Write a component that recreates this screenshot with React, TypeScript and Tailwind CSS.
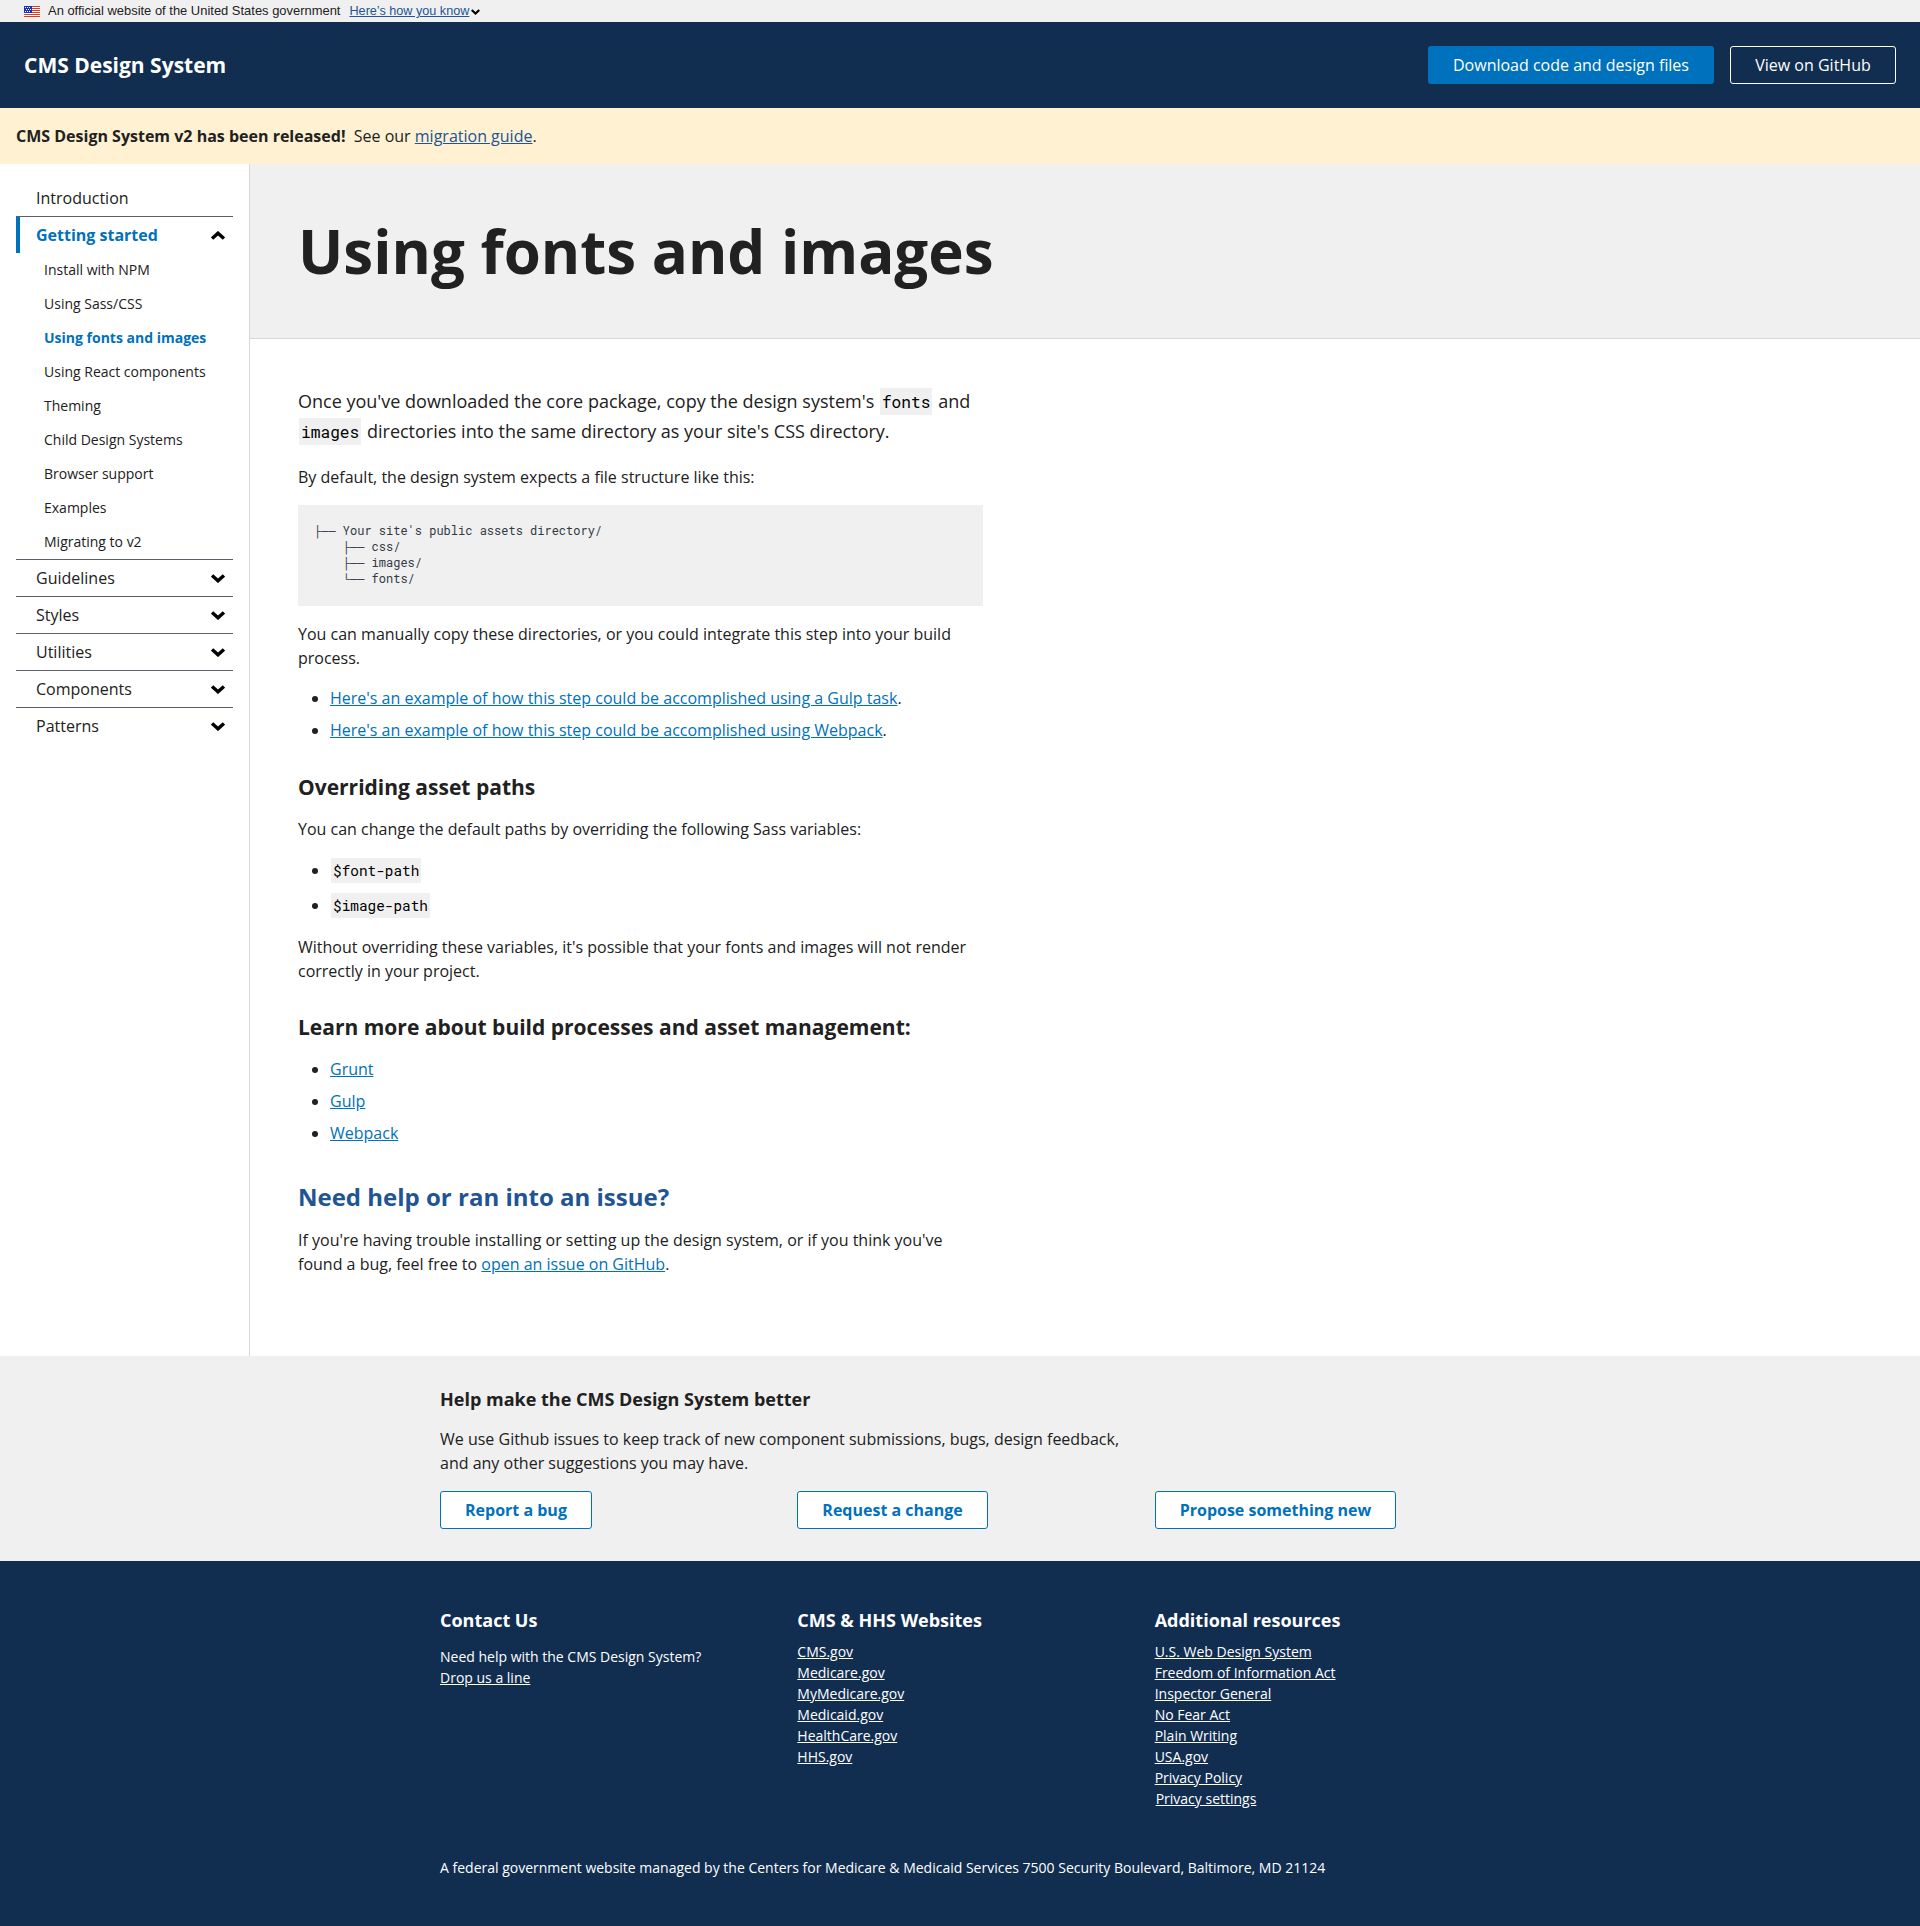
import React from 'react';

const sections = ['Guidelines', 'Styles', 'Utilities', 'Components', 'Patterns'];
const subItems = [
  'Install with NPM',
  'Using Sass/CSS',
  'Using fonts and images',
  'Using React components',
  'Theming',
  'Child Design Systems',
  'Browser support',
  'Examples',
  'Migrating to v2',
];
const websites = ['CMS.gov', 'Medicare.gov', 'MyMedicare.gov', 'Medicaid.gov', 'HealthCare.gov', 'HHS.gov'];
const resources = [
  'U.S. Web Design System',
  'Freedom of Information Act',
  'Inspector General',
  'No Fear Act',
  'Plain Writing',
  'USA.gov',
  'Privacy Policy',
];

function Chevron({ up = false, className = '' }: { up?: boolean; className?: string }) {
  return (
    <svg viewBox="0 0 14 9" className={className} fill="none" stroke="#000" strokeWidth="3.4">
      {up ? <path d="M1.1 7.6 7 2.2l5.9 5.4" /> : <path d="M1.1 1.4 7 6.8l5.9-5.4" />}
    </svg>
  );
}

function Flag() {
  return (
    <svg viewBox="0 0 16 11" className="mt-px h-[11px] w-4" shapeRendering="crispEdges">
      <rect width="16" height="11" fill="#fff" />
      {[0, 2, 4, 6, 8, 10].map((y) => (
        <rect key={y} y={y} width="16" height="1" fill="#db3e1f" />
      ))}
      <rect width="8" height="7" fill="#1e33b1" />
      {[1, 3, 5].map((y) =>
        [1, 3, 5].map((x) => <rect key={`${x}-${y}`} x={y === 3 ? x + 1 : x} y={y} width="1" height="1" fill="#fff" />),
      )}
    </svg>
  );
}

function Link({ children }: { children: React.ReactNode }) {
  return <a className="text-[#0071bc] underline">{children}</a>;
}

function Code({ children }: { children: React.ReactNode }) {
  return (
    <code className="mx-px bg-[#f0f0f0] px-[2px] py-[3px] font-['Roboto_Mono','Liberation_Mono',monospace] text-[0.9em] leading-none text-black">
      {children}
    </code>
  );
}

export default function App() {
  return (
    <div className="flex h-[1926px] flex-col bg-white font-['Open_Sans',sans-serif] text-base text-[#212121]">
      <div className="flex h-[22px] items-center bg-[#f0f0f0] pl-6 font-['Liberation_Sans',sans-serif] text-[12.95px] leading-[18px]">
        <Flag />
        <span className="ml-2">An official website of the United States government</span>
        <a className="ml-[9px] text-[12.65px] text-[#205493] underline">Here’s how you know</a>
        <Chevron className="ml-[2px] mt-px h-[6px] w-[9px]" />
      </div>

      <header className="flex h-[86px] items-center bg-[#112e51] px-6 text-white">
        <span className="text-[21px] font-bold leading-[27px]">CMS Design System</span>
        <div className="ml-auto flex gap-4">
          <button className="h-[38px] w-[286px] rounded-[3px] bg-[#0071bc]">Download code and design files</button>
          <button className="h-[38px] w-[166px] rounded-[3px] border border-white">View on GitHub</button>
        </div>
      </header>

      <div className="flex h-14 items-center bg-[#fff1d2] px-4">
        <p>
          <b>CMS Design System v2 has been released!</b>&nbsp; See our <a className="text-[#205493] underline">migration guide</a>.
        </p>
      </div>

      <div className="flex h-[1192px]">
        <nav className="w-[250px] border-r border-[#d6d7d9] pl-4 pr-4 pt-4">
          <div className="flex h-[37px] items-center border-b border-[#5b616b] pl-5">Introduction</div>
          <div className="flex h-9 items-center border-l-4 border-[#0071bc] pl-4 pr-2 font-bold text-[#0071bc]">
            Getting started
            <Chevron up className="ml-auto h-[9px] w-[14px]" />
          </div>
          <ul className="border-b border-[#5b616b] text-sm leading-[21px]">
            {subItems.map((item) => (
              <li
                key={item}
                className={
                  item === 'Using fonts and images'
                    ? 'flex h-[34px] items-center pb-0.5 pl-7 font-bold text-[#0071bc]'
                    : 'flex h-[34px] items-center pb-0.5 pl-7'
                }
              >
                {item}
              </li>
            ))}
          </ul>
          {sections.map((s) => (
            <div key={s} className="flex h-[37px] items-center border-b border-[#5b616b] pl-5 pr-2 last:h-9 last:border-b-0">
              {s}
              <Chevron className="ml-auto h-[9px] w-[14px]" />
            </div>
          ))}
        </nav>

        <main className="flex-1">
          <div className="flex h-[175px] items-center border-b border-[#d6d7d9] bg-[#f0f0f0] pl-12">
            <h1 className="text-[60px] font-bold leading-[78px]">Using fonts and images</h1>
          </div>
          <div className="w-[733px] pl-12 pt-[47px]">
            <p className="h-[60px] text-[18px] leading-[30px]">
              Once you've downloaded the core package, copy the design system's{' '}
              <Code>fonts</Code> and{' '}
              <Code>images</Code> directories into the same directory as your site's CSS directory.
            </p>
            <p className="mt-[19px]">By default, the design system expects a file structure like this:</p>
            <pre className="mt-4 h-[101px] bg-[#f0f0f0] px-4 pt-[17px] font-['Roboto_Mono','Liberation_Mono',monospace] text-[12px] leading-4 text-[#323a45]">
              {"├── Your site's public assets directory/\n    ├── css/\n    ├── images/\n    └── fonts/"}
            </pre>
            <p className="mt-4">
              You can manually copy these directories, or you could integrate this step into your build process.
            </p>
            <ul className="mt-4 list-disc space-y-2 pl-8">
              <li><Link>Here's an example of how this step could be accomplished using a Gulp task</Link>.</li>
              <li><Link>Here's an example of how this step could be accomplished using Webpack</Link>.</li>
            </ul>
            <h2 className="mt-8 text-[21px] font-bold leading-[27px]">Overriding asset paths</h2>
            <p className="mt-4">You can change the default paths by overriding the following Sass variables:</p>
            <ul className="mt-4 list-disc pl-8">
              <li className="h-[35px] leading-[27px]"><Code>$font-path</Code></li>
              <li className="h-[27px] leading-[27px]"><Code>$image-path</Code></li>
            </ul>
            <p className="mt-4">
              Without overriding these variables, it's possible that your fonts and images will not render correctly in your project.
            </p>
            <h2 className="mt-[31px] text-[21px] font-bold leading-[27px]">Learn more about build processes and asset management:</h2>
            <ul className="mt-4 list-disc space-y-2 pl-8">
              <li><Link>Grunt</Link></li>
              <li><Link>Gulp</Link></li>
              <li><Link>Webpack</Link></li>
            </ul>
            <h2 className="mt-9 text-2xl font-bold leading-[31px] text-[#205493]">Need help or ran into an issue?</h2>
            <p className="mt-4">
              If you're having trouble installing or setting up the design system, or if you think you've found a bug, feel free to{' '}
              <Link>open an issue on GitHub</Link>.
            </p>
          </div>
        </main>
      </div>

      <section className="h-[205px] bg-[#f0f0f0] pl-[440px] pt-8">
        <h3 className="text-[18px] font-bold leading-[23px]">Help make the CMS Design System better</h3>
        <p className="mt-4 w-[700px]">
          We use Github issues to keep track of new component submissions, bugs, design feedback, and any other suggestions you may have.
        </p>
        <div className="mt-4 grid w-[1072px] grid-cols-3 font-bold text-[#0071bc]">
          {['Report a bug', 'Request a change', 'Propose something new'].map((label) => (
            <div key={label}>
              <button className="h-[38px] rounded-[3px] border border-[#0071bc] bg-white px-6">{label}</button>
            </div>
          ))}
        </div>
      </section>

      <footer className="h-[365px] bg-[#112e51] pl-[440px] pt-12 text-sm leading-[21px] text-white">
        <div className="grid h-[248px] w-[1072px] grid-cols-3">
          <div>
            <h3 className="text-[18px] font-bold leading-[23px]">Contact Us</h3>
            <p className="mt-[14px]">Need help with the CMS Design System?</p>
            <a className="underline">Drop us a line</a>
          </div>
          <div>
            <h3 className="mb-[9px] text-[18px] font-bold leading-[23px]">CMS &amp; HHS Websites</h3>
            {websites.map((w) => (
              <div key={w}><a className="underline">{w}</a></div>
            ))}
          </div>
          <div>
            <h3 className="mb-[9px] text-[18px] font-bold leading-[23px]">Additional resources</h3>
            {resources.map((r) => (
              <div key={r}><a className="underline">{r}</a></div>
            ))}
            <div className="pl-px"><a className="underline">Privacy settings</a></div>
          </div>
        </div>
        <p>A federal government website managed by the Centers for Medicare &amp; Medicaid Services 7500 Security Boulevard, Baltimore, MD 21124</p>
      </footer>
    </div>
  );
}
